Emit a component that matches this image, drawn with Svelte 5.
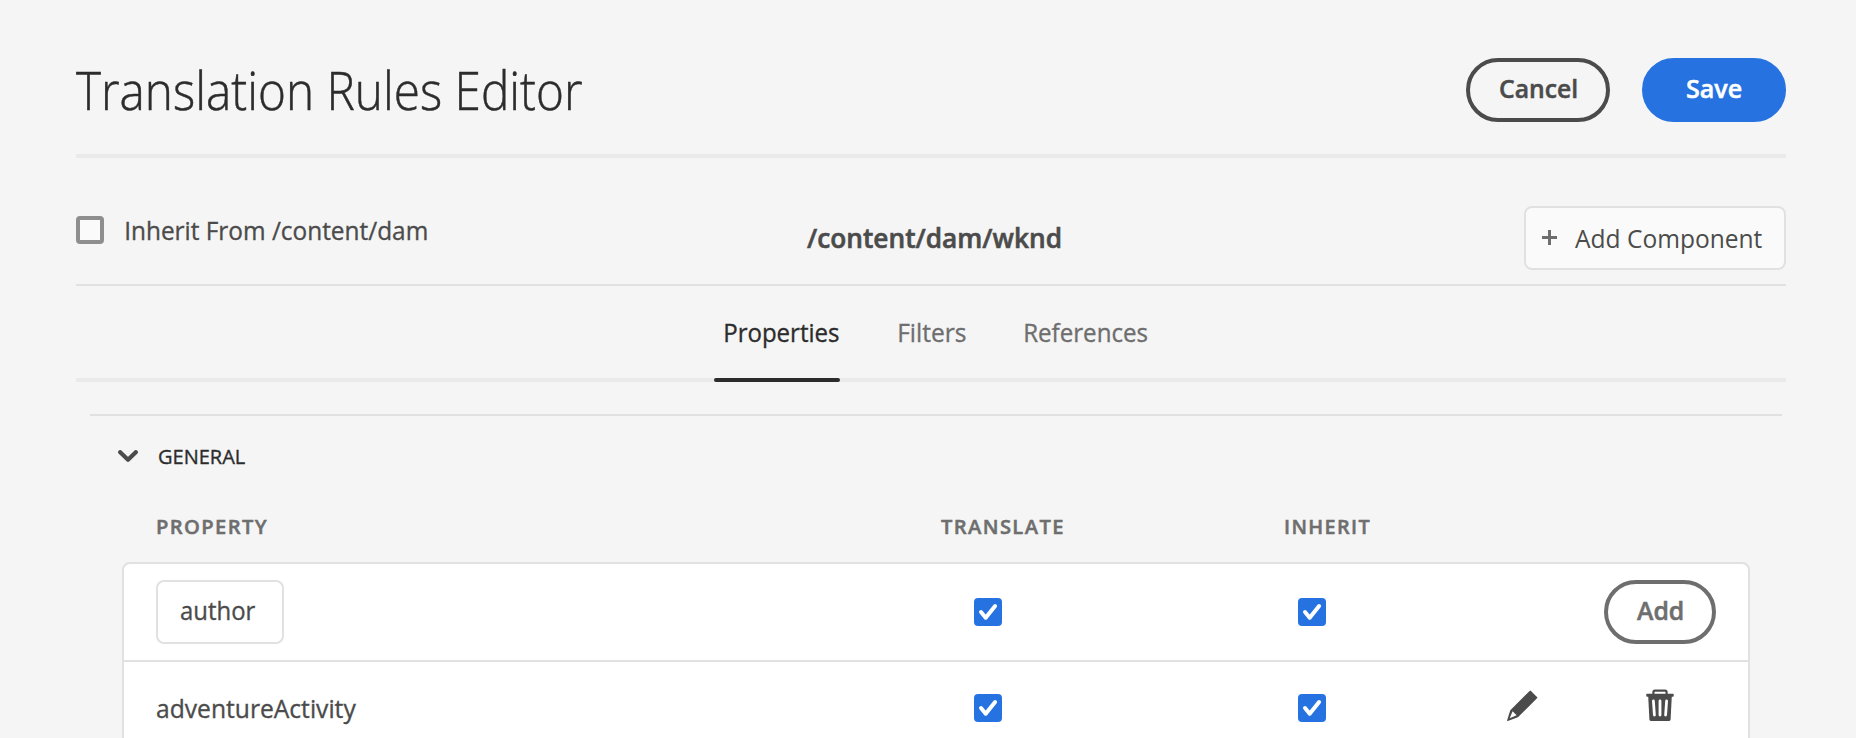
<script>
  const tabs = [
    { name: 'Properties', width: 114 },
    { name: 'Filters', width: 67 },
    { name: 'References', width: 122.5 }
  ];

  // Condenses a label horizontally so that its drawn glyphs span `width` pixels.
  function fit(node, width) {
    const style = getComputedStyle(node);
    const ctx = document.createElement('canvas').getContext('2d');
    ctx.font = `${style.fontWeight} ${style.fontSize} ${style.fontFamily}`;
    const spacing = parseFloat(style.letterSpacing) || 0;
    const m = ctx.measureText(node.textContent);
    const ink =
      m.actualBoundingBoxLeft + m.actualBoundingBoxRight + spacing * (node.textContent.length - 1);
    const scale = width / ink;
    node.style.transform = `translateX(${m.actualBoundingBoxLeft * scale}px) scaleX(${scale})`;
  }
</script>

{#snippet label(text, width)}
  <span class="label" style="width: {width}px"><span class="glyphs" use:fit={width}>{text}</span></span>
{/snippet}

{#snippet checked()}
  <svg class="check" viewBox="0 0 28 28" role="checkbox" aria-checked="true">
    <rect width="28" height="28" rx="4" fill="#2672e1" />
    <path d="M7 14 11.7 19.7 21.1 8" fill="none" stroke="#fff" stroke-width="4" stroke-linecap="round" stroke-linejoin="round" />
  </svg>
{/snippet}

<main>
  <header>
    <h1>{@render label('Translation Rules Editor', 506)}</h1>
    <div class="actions">
      <button class="pill">{@render label('Cancel', 77)}</button>
      <button class="pill primary">{@render label('Save', 54.5)}</button>
    </div>
  </header>

  <div class="context">
    <div class="inherit">
      <span class="box"></span>
      {@render label('Inherit From /content/dam', 301)}
    </div>
    <strong class="path">{@render label('/content/dam/wknd', 253)}</strong>
    <button class="component">
      <svg width="15" height="15" viewBox="0 0 15 15"><path d="M7.5 0v15M0 7.5h15" stroke="#6e6e6e" stroke-width="3" /></svg>
      {@render label('Add Component', 187)}
    </button>
  </div>

  <nav>
    {#each tabs as tab, i}
      <div class="tab" class:active={i === 0}>{@render label(tab.name, tab.width)}</div>
    {/each}
  </nav>

  <section>
    <div class="group">
      <svg width="20" height="14" viewBox="0 0 20 14"><path d="M2.2 2.2 10 9.8 17.8 2.2" fill="none" stroke="#4b4b4b" stroke-width="4.2" stroke-linecap="round" stroke-linejoin="round" /></svg>
      {@render label('GENERAL', 86.5)}
    </div>
    <div class="columns">
      {@render label('PROPERTY', 110.5)}
      {@render label('TRANSLATE', 122)}
      {@render label('INHERIT', 85)}
    </div>
    <div class="table">
      <div class="row">
        <div class="field">{@render label('author', 74.5)}</div>
        {@render checked()}
        {@render checked()}
        <button class="pill add">{@render label('Add', 45.5)}</button>
      </div>
      <div class="row item">
        {@render label('adventureActivity', 199.5)}
        {@render checked()}
        {@render checked()}
        <svg class="icon" width="31" height="32" viewBox="0 0 31 32">
          <path fill="#4b4b4b" fill-rule="evenodd" d="M22.6.9Q23.3.2 24 .9L30 6.9Q30.7 7.6 30 8.3L11.2 26.9 10.2 27.6.8 30.9Q-.2 31.2.2 30L3.2 20.6 3.8 19.7ZM5.6 21.2 2.7 28.3 9.6 25.2Z" />
        </svg>
        <svg class="icon trash" width="28" height="32" viewBox="0 0 28 32">
          <path d="M7.4 5.5V3.2Q7.4 1.6 9 1.6H19Q20.6 1.6 20.6 3.2V5.5" fill="none" stroke="#4b4b4b" stroke-width="2.2" />
          <rect x=".3" y="4.8" width="27.4" height="2.9" rx=".8" fill="#4b4b4b" />
          <path d="M2.2 7H25.8L24.6 30.6Q24.5 32 23.1 32H4.9Q3.5 32 3.4 30.6Z" fill="#4b4b4b" />
          <path d="M7.4 12 8.4 26M14 12V26M20.6 12 19.6 26" stroke="#fff" stroke-width="2.8" stroke-linecap="round" />
        </svg>
      </div>
    </div>
  </section>
</main>

<style>
  :global(body) {
    background: #f5f5f5;
  }
  main {
    box-sizing: border-box;
    height: 738px;
    overflow: hidden;
    padding: 0 70px 0 76px;
    font: 400 26.3px 'Open Sans', 'Noto Sans', sans-serif;
    color: #4b4b4b;
    -webkit-text-stroke: 0.35px currentColor;
  }
  .label {
    display: block;
    flex: none;
    white-space: nowrap;
  }
  .glyphs {
    display: inline-block;
    vertical-align: top;
    transform-origin: 0 50%;
  }
  header {
    display: flex;
    justify-content: space-between;
    box-sizing: border-box;
    height: 158px;
    padding-top: 58px;
    border-bottom: 4px solid #eaeaea;
  }
  h1 {
    margin: 0;
    font-size: 53px;
    font-weight: 300;
    line-height: 64px;
    color: #2c2c2c;
    -webkit-text-stroke: 0.5px currentColor;
  }
  .actions {
    display: flex;
    gap: 32px;
  }
  button {
    box-sizing: border-box;
    display: flex;
    font: inherit;
    color: inherit;
    height: 64px;
  }
  .pill {
    justify-content: center;
    width: 144px;
    padding: 0;
    border: 4px solid #4b4b4b;
    border-radius: 32px;
    background: none;
    font-size: 25.5px;
    font-weight: 600;
    line-height: 52px;
    align-items: flex-start;
    -webkit-text-stroke: 0.5px currentColor;
  }
  .primary {
    border-color: #2672e1;
    background: #2672e1;
    color: #fff;
  }
  .context {
    display: grid;
    grid-template-columns: 730.5px 1fr auto;
    box-sizing: border-box;
    height: 128px;
    padding-top: 48px;
    border-bottom: 2px solid #e1e1e1;
  }
  .inherit {
    display: flex;
    gap: 21.5px;
    padding-top: 10px;
    line-height: 28px;
  }
  .box {
    box-sizing: border-box;
    width: 28px;
    height: 28px;
    border: 4px solid #8e8e8e;
    border-radius: 4px;
    background: #fafafa;
  }
  .path {
    font-size: 27.5px;
    font-weight: 600;
    line-height: 64px;
    -webkit-text-stroke: 0.6px currentColor;
  }
  .component {
    width: 262px;
    padding: 0 0 0 16px;
    gap: 18px;
    border: 2px solid #e1e1e1;
    border-radius: 8px;
    background: #fafafa;
    line-height: 60px;
    -webkit-text-stroke: 0;
  }
  .component svg {
    margin-top: 22px;
  }
  nav {
    display: flex;
    gap: 59px;
    height: 92px;
    padding-left: 638px;
    border-bottom: 4px solid #eaeaea;
    line-height: 92px;
    color: #6e6e6e;
  }
  .active {
    position: relative;
    padding: 0 1px 0 11px;
    color: #2c2c2c;
  }
  .active::after {
    content: '';
    position: absolute;
    left: 0;
    right: 0;
    bottom: -4px;
    height: 4px;
    border-radius: 2px;
    background: #2c2c2c;
  }
  section {
    margin: 32px 4px 0 14px;
    border-top: 2px solid #e1e1e1;
  }
  .group {
    display: flex;
    align-items: center;
    gap: 21px;
    height: 80px;
    padding-left: 28px;
    font-size: 20.7px;
    line-height: 80px;
    color: #2c2c2c;
  }
  .group svg {
    margin-top: 2px;
  }
  .columns {
    display: grid;
    grid-template-columns: 784px 343.5px auto;
    height: 60px;
    margin-bottom: 6px;
    padding-left: 67px;
    font-size: 20.5px;
    font-weight: 600;
    line-height: 61px;
    letter-spacing: 1.4px;
    color: #6e6e6e;
    -webkit-text-stroke: 0.5px currentColor;
  }
  .table {
    margin: 0 32px;
    border: 2px solid #e1e1e1;
    border-radius: 8px;
    background: #fff;
  }
  .row {
    display: grid;
    grid-template-columns: 818px 324px 209px 97px 112px;
    align-items: center;
    height: 96px;
    padding-left: 32px;
  }
  .item {
    height: 92px;
    border-top: 2px solid #e1e1e1;
  }
  .item .label {
    padding-left: 0.5px;
  }
  .check {
    width: 28px;
    height: 28px;
  }
  .field {
    box-sizing: border-box;
    width: 128px;
    height: 64px;
    padding-left: 22.5px;
    border: 2px solid #e1e1e1;
    border-radius: 8px;
    line-height: 56px;
  }
  .add {
    grid-column: 5;
    width: 112px;
    border-color: #6e6e6e;
    color: #6e6e6e;
  }
  .icon {
    margin-top: -5px;
  }
  .trash {
    justify-self: center;
    margin-top: -6px;
  }
</style>
